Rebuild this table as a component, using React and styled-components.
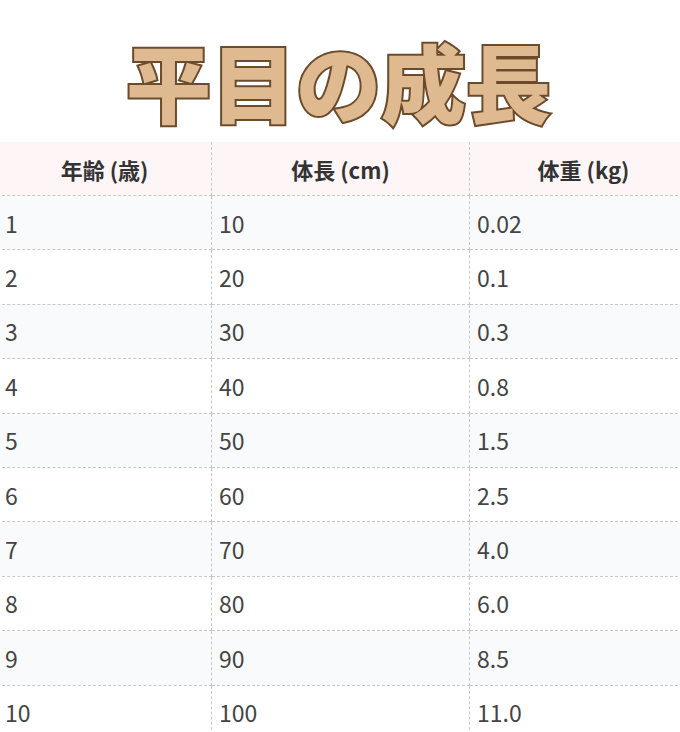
import React from 'react'
import styled, { createGlobalStyle } from 'styled-components'

const GlobalStyle = createGlobalStyle`
  body {
    margin: 0;
    background: #ffffff;
    overflow: hidden;
    font-family: "Noto Sans CJK JP", "Noto Sans", sans-serif;
  }
`

const rows = [
  [1, 10, '0.02'],
  [2, 20, '0.1'],
  [3, 30, '0.3'],
  [4, 40, '0.8'],
  [5, 50, '1.5'],
  [6, 60, '2.5'],
  [7, 70, '4.0'],
  [8, 80, '6.0'],
  [9, 90, '8.5'],
  [10, 100, '11.0'],
]

function App() {
  return (
    <Page>
      <GlobalStyle />
      <Title>平目の成長</Title>
      <Table>
        <colgroup>
          <col style={{ width: 214 }} />
          <col style={{ width: 258 }} />
          <col style={{ width: 228 }} />
        </colgroup>
        <thead>
          <tr>
            <Th>年齢 (歳)</Th>
            <Th>体長 (cm)</Th>
            <Th>体重 (kg)</Th>
          </tr>
        </thead>
        <tbody>
          {rows.map((r, i) => (
            <Row key={r[0]} $odd={i % 2 === 0}>
              <Td>{r[0]}</Td>
              <Td>{r[1]}</Td>
              <Td>{r[2]}</Td>
            </Row>
          ))}
        </tbody>
      </Table>
    </Page>
  )
}

const Page = styled.div`
  width: 680px;
  padding-top: 30px;
`

const Title = styled.h1`
  margin: 0 0 12px -3px;
  text-align: center;
  font-family: "Noto Sans CJK JP", sans-serif;
  font-weight: 900;
  font-size: 85px;
  line-height: 100px;
  color: #dfb990;
  -webkit-text-stroke: 4px #6b4b2c;
  paint-order: stroke fill;
`

const Table = styled.table`
  width: 700px;
  margin-left: -3px;
  border-collapse: collapse;
  table-layout: fixed;
`

const Th = styled.th`
  height: 53px;
  padding: 0 8px;
  background: #fdf5f6;
  color: #333333;
  font-size: 22px;
  font-weight: 700;
  text-align: center;
  border: 1px dashed #c8c8c8;
  border-top: none;
`

const Row = styled.tr`
  background: ${p => (p.$odd ? '#f9fafc' : '#ffffff')};
`

const Td = styled.td`
  height: 53.4px;
  padding: 0 7px;
  color: #444444;
  font-size: 23px;
  border: 1px dashed #c8c8c8;
`

export default App
